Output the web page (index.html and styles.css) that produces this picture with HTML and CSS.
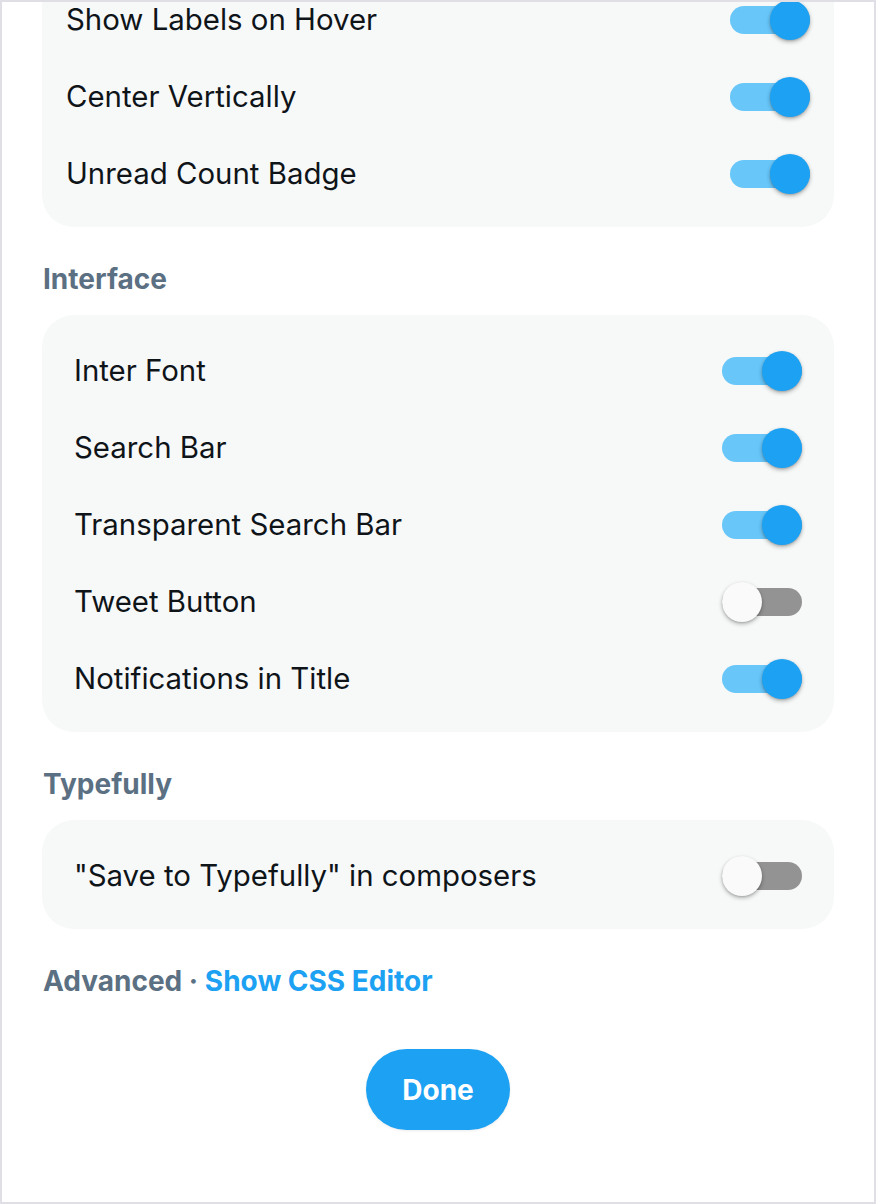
FILE: index.html
```html
<!DOCTYPE html>
<html>
<head>
<meta charset="utf-8">
<link rel="stylesheet" href="styles.css">
</head>
<body>
<div class="frame">
  <div class="content">
    <div class="card card-narrow">
      <div class="row"><span class="label">Show Labels on Hover</span><span class="switch on"><span class="track"></span><span class="knob"></span></span></div>
      <div class="row"><span class="label">Center Vertically</span><span class="switch on"><span class="track"></span><span class="knob"></span></span></div>
      <div class="row"><span class="label">Unread Count Badge</span><span class="switch on"><span class="track"></span><span class="knob"></span></span></div>
    </div>

    <h2 class="heading">Interface</h2>
    <div class="card">
      <div class="row"><span class="label">Inter Font</span><span class="switch on"><span class="track"></span><span class="knob"></span></span></div>
      <div class="row"><span class="label">Search Bar</span><span class="switch on"><span class="track"></span><span class="knob"></span></span></div>
      <div class="row"><span class="label">Transparent Search Bar</span><span class="switch on"><span class="track"></span><span class="knob"></span></span></div>
      <div class="row"><span class="label">Tweet Button</span><span class="switch off"><span class="track"></span><span class="knob"></span></span></div>
      <div class="row"><span class="label">Notifications in Title</span><span class="switch on"><span class="track"></span><span class="knob"></span></span></div>
    </div>

    <h2 class="heading">Typefully</h2>
    <div class="card">
      <div class="row"><span class="label">"Save to Typefully" in composers</span><span class="switch off"><span class="track"></span><span class="knob"></span></span></div>
    </div>

    <p class="advanced">Advanced · <a class="link">Show CSS Editor</a></p>

    <div class="actions">
      <button class="done">Done</button>
    </div>
  </div>
</div>
</body>
</html>
```

FILE: styles.css
```css
* { box-sizing: border-box; }
html, body { margin: 0; padding: 0; background: #ffffff; }
body {
  font-family: Inter, "Noto Sans", sans-serif;
  color: #0f1419;
}
.frame {
  width: 876px;
  height: 1204px;
  border: 2px solid #dfdfe5;
  overflow: hidden;
  background: #ffffff;
}
.content {
  padding: 0 40px;
  margin-top: -38px;
}
.card {
  background: #f7f9f9;
  border-radius: 32px;
  padding: 17px 32px 15px 32px;
}
.card-narrow {
  padding: 17px 24px 15px 24px;
}
.row {
  height: 77px;
  display: flex;
  align-items: center;
  justify-content: space-between;
}
.label {
  font-size: 29.4px;
  line-height: 36px;
  font-weight: 400;
}
.switch {
  position: relative;
  width: 80px;
  height: 40px;
  display: block;
  flex: none;
}
.track {
  position: absolute;
  left: 0;
  right: 0;
  top: 6px;
  height: 28px;
  border-radius: 14px;
  background: #68c6f9;
}
.knob {
  position: absolute;
  top: 0;
  width: 40px;
  height: 40px;
  border-radius: 50%;
  background: #1d9bf0;
  box-shadow: 0 2px 4px rgba(0, 0, 0, 0.28), 0 1px 2px rgba(0, 0, 0, 0.12);
}
.switch.on .knob { right: 0; background: #1da1f2; }
.switch.off .track { background: #939393; }
.switch.off .knob { left: 0; background: #fafafa; }
.heading {
  margin: 36px 0 20px 1px;
  font-size: 28px;
  line-height: 32px;
  font-weight: 700;
  color: #5b7083;
}
.advanced {
  margin: 36px 0 0 1px;
  font-size: 28px;
  line-height: 32px;
  font-weight: 700;
  color: #5b7083;
}
.link {
  color: #1da1f2;
  text-decoration: none;
}
.actions {
  display: flex;
  justify-content: center;
  margin-top: 52px;
}
.done {
  width: 144px;
  height: 81px;
  border: none;
  border-radius: 41px;
  background: #1da1f2;
  color: #ffffff;
  font-family: Inter, "Noto Sans", sans-serif;
  font-size: 28px;
  font-weight: 700;
  box-shadow: 0 1px 3px rgba(0, 0, 0, 0.08);
  padding: 0;
}
```
